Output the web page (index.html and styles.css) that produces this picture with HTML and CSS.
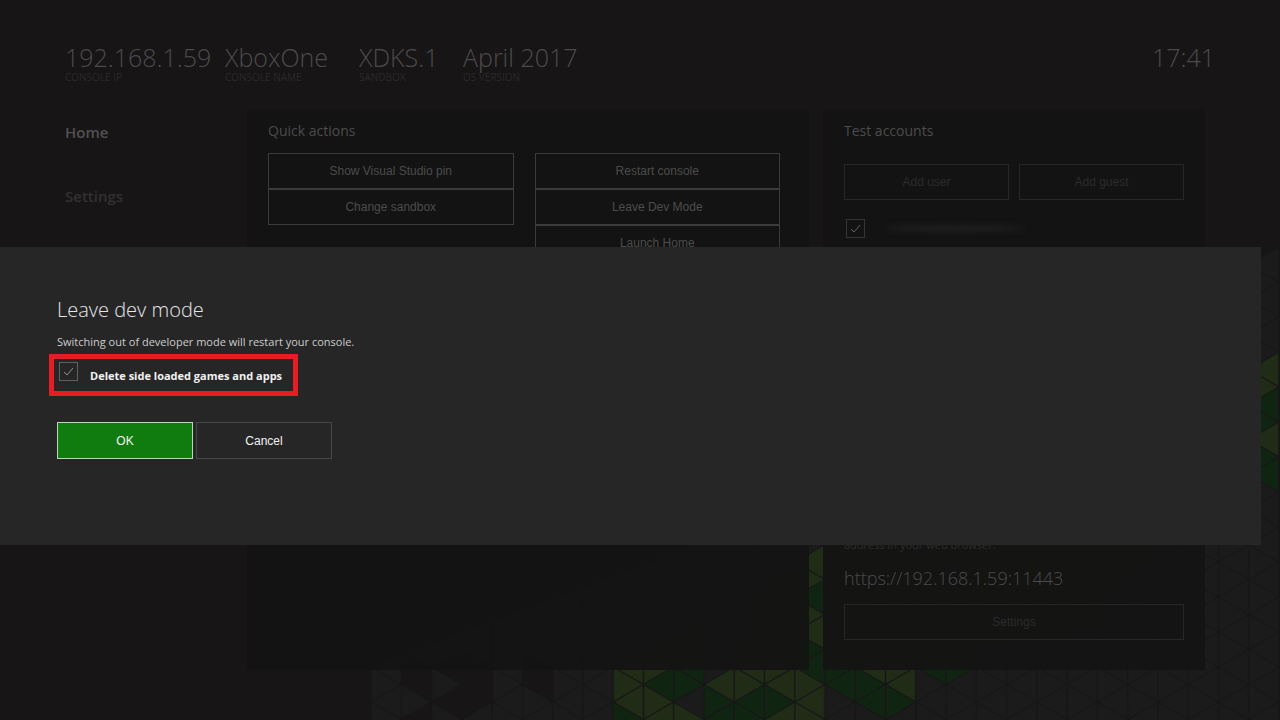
FILE: index.html
```html
<!DOCTYPE html>
<html lang="en">
<head>
  <meta charset="UTF-8">
  <meta name="viewport" content="width=device-width, initial-scale=1.0">
  <title>Dev Home</title>
  <link rel="stylesheet" href="styles.css">
</head>
<body>
  <!-- triangle wallpaper, drawn on a grid of 30 x 17.5 cells -->
  <svg class="wallpaper" viewBox="0 0 900 473" preserveAspectRatio="none" aria-hidden="true">
    <defs>
      <pattern id="mesh" width="60" height="35" patternUnits="userSpaceOnUse">
        <path d="M0 0L60 35M0 35L60 0M0 0V35M30 0V35M60 0V35" />
      </pattern>
    </defs>
    <g transform="scale(30 17.5)">
      <path class="grey" d="M0 24L14 15L29 1L30 0V27.1H0z" />
      <path class="olive" d="M8 24L9 23L10 24L9 25L10 26L11 27L10 28L9 27L8 26z" />
      <path class="green" d="M8 26L9 27L8 28z" />
      <path class="green" d="M9 25L11 23V25L10 26z" />
      <path class="olive" d="M11 25L13 23L14 24L15 25V28L13 27L14 26L13 25L12 26z" />
      <path class="green" d="M11 25L12 26L13 25L14 26L13 27L12 28L11 27z" />
      <path class="olive" d="M14 18L15 17V19L14 20zM14 18L15 19L14 20zM14 22L15 21V23z" />
      <path class="olive" d="M14 20L15 19L14 18zM14 22L15 21L14 20z" />
      <path class="green" d="M14 20L15 19V21zM14 22L15 23L16 24V26L15 25L14 24z" />
      <path class="green" d="M16 24L18 26L17 27L16 26z" />
      <path class="olive" d="M16 24L17 23L18 24V26z" />
      <path class="green" d="M18 24L19 23L20 24L19 25z" />
      <path class="olive" d="M29 7L30 6V8L29 9zM29 11L30 10V12z" />
      <path class="green" d="M29 9L30 8V10L29 11zM29 11L30 12V14L29 13z" />
      <path class="olive" d="M8 24L11 21V24zM13 19L14 18V24H12zM15 10H26V18L24 20V22L20 23V24H15z" opacity="0.6" />
    </g>
    <rect class="mesh" width="900" height="473" />
    <g class="gaps" transform="scale(30 17.5)">
      <path d="M1 23V25L2 26V24zM1 27L2 26V28zM2 24L3 25L2 26L3 27L4 26V24L3 23zM5 23V25L6 26V24z" />
    </g>
  </svg>

  <div class="home">
    <header class="header">
      <dl class="facts">
        <div><dd>192.168.1.59</dd><dt>CONSOLE IP</dt></div>
        <div><dd>XboxOne</dd><dt>CONSOLE NAME</dt></div>
        <div><dd>XDKS.1</dd><dt>SANDBOX</dt></div>
        <div><dd>April 2017</dd><dt>OS VERSION</dt></div>
      </dl>
      <time class="clock">17:41</time>
    </header>

    <div class="content">
      <nav class="nav">
        <a class="active" href="#home">Home</a>
        <a href="#settings">Settings</a>
      </nav>

      <main class="panel actions">
        <h2>Quick actions</h2>
        <div class="action-columns">
          <div class="stack">
            <button type="button">Show Visual Studio pin</button>
            <button type="button">Change sandbox</button>
          </div>
          <div class="stack">
            <button type="button">Restart console</button>
            <button type="button">Leave Dev Mode</button>
            <button type="button">Launch Home</button>
          </div>
        </div>
      </main>

      <aside class="panel accounts">
        <h2>Test accounts</h2>
        <div class="account-buttons">
          <button type="button">Add user</button>
          <button type="button">Add guest</button>
        </div>
        <div class="account">
          <input type="checkbox" aria-label="Signed in" checked>
          <span class="account-name"></span>
        </div>
        <div class="remote">
          <p>address in your web browser.</p>
          <p class="url">https://192.168.1.59:11443</p>
          <button type="button">Settings</button>
        </div>
      </aside>
    </div>
  </div>

  <div class="dialog" role="dialog" aria-labelledby="dialog-title">
    <h1 id="dialog-title">Leave dev mode</h1>
    <p>Switching out of developer mode will restart your console.</p>
    <div class="option">
      <input type="checkbox" id="delete-apps" checked>
      <label for="delete-apps">Delete side loaded games and apps</label>
    </div>
    <div class="dialog-buttons">
      <button type="button" class="ok">OK</button>
      <button type="button">Cancel</button>
    </div>
  </div>
</body>
</html>
```
FILE: styles.css
```css
:root {
  --background: #171516;
  --panel: rgba(19, 19, 19, 0.92);
  --dialog: #262626;
  --line: #3b3b3b;
  --line-dim: #272727;
  --text: #4c4b4c;
  --accent: #107c10;
}

* {
  margin: 0;
  padding: 0;
  box-sizing: border-box;
}

body {
  position: relative;
  min-height: 100vh;
  overflow: hidden;
  background: var(--background);
  color: var(--text);
  font-family: "Open Sans", "Noto Sans", sans-serif;
  font-size: 12px;
}

button {
  height: 36px;
  background: transparent;
  border: 1px solid var(--line);
  color: var(--text);
  font-family: "Liberation Sans", Arial, sans-serif;
  font-size: 12px;
}

input[type="checkbox"] {
  appearance: none;
  width: 19px;
  height: 19px;
  border: 1px solid #343434;
}

input[type="checkbox"]:checked {
  background: url("data:image/svg+xml,%3Csvg xmlns='http://www.w3.org/2000/svg' viewBox='0 0 17 17'%3E%3Cpath d='M4 9l3 3 6-7' fill='none' stroke='%23606060'/%3E%3C/svg%3E");
}

.wallpaper {
  position: absolute;
  right: 1px;
  bottom: 0;
  width: 908px;
  height: 473px;
}

.wallpaper .grey { fill: #1b1b1c; }
.wallpaper .olive { fill: #202c16; }
.wallpaper .green { fill: #102511; }
.wallpaper .mesh { fill: url(#mesh); }
.wallpaper .gaps { fill: #181516; }

.wallpaper pattern path {
  fill: none;
  stroke: #151615;
  stroke-width: 1.5;
}

.home {
  position: relative;
  display: flex;
  flex-direction: column;
  min-height: 100vh;
  padding: 43px 75px 50px 65px;
}

.header {
  display: flex;
  justify-content: space-between;
  height: 66px;
}

.facts {
  display: grid;
  grid-template-columns: 160px 134px 104px auto;
}

.facts div {
  display: flex;
  flex-direction: column;
}

.facts dd,
.clock {
  font-size: 25px;
  font-weight: 300;
  line-height: 29px;
}

.facts dt {
  color: #2b292a;
  font-size: 10px;
  line-height: 10px;
}

.clock {
  margin-right: -10px;
}

.content {
  flex: 1;
  display: grid;
  grid-template-columns: 168px 1fr 382px;
  gap: 14px;
}

.nav {
  display: flex;
  flex-direction: column;
  gap: 40px;
  padding-top: 11px;
}

.nav a {
  color: #333132;
  font-size: 15px;
  font-weight: 600;
  line-height: 24px;
  text-decoration: none;
}

.nav a.active {
  color: #525152;
}

.panel {
  display: flex;
  flex-direction: column;
  padding: 11px 21px 30px;
  background: var(--panel);
}

.panel.actions {
  padding-right: 29px;
}

.panel h2 {
  font-size: 14px;
  font-weight: 400;
  line-height: 22px;
}

.action-columns {
  display: grid;
  grid-template-columns: 1fr 1fr;
  gap: 21px;
  margin-top: 11px;
}

.stack {
  display: flex;
  flex-direction: column;
}

.accounts button {
  border-color: var(--line-dim);
  color: #2b2b2b;
}

.account-buttons {
  display: grid;
  grid-template-columns: 1fr 1fr;
  gap: 10px;
  margin-top: 22px;
}

.account {
  display: flex;
  align-items: center;
  gap: 20px;
  margin: 19px 2px 0;
}

.account-name {
  width: 140px;
  height: 5px;
  background: #242424;
  border-radius: 50%;
  filter: blur(3px);
}

.remote {
  display: flex;
  flex-direction: column;
  margin-top: auto;
}

.remote p {
  color: #2d2d2d;
  font-size: 11px;
  line-height: 16px;
}

.remote .url {
  margin: 10px 0 11px;
  color: var(--text);
  font-size: 18px;
  font-weight: 300;
  line-height: 30px;
}

.dialog {
  position: absolute;
  top: 247px;
  left: 0;
  right: 19px;
  padding: 48px 57px 86px;
  background: var(--dialog);
  color: #ccc;
}

.dialog h1 {
  color: #e6e6e6;
  font-size: 20px;
  font-weight: 300;
  line-height: 30px;
}

.dialog p {
  margin-top: 8px;
  font-size: 11px;
  line-height: 18px;
}

.option {
  display: flex;
  width: fit-content;
  gap: 12px;
  margin: 3px 0 0 -8px;
  padding: 3px 11px 3px 5px;
  border: 5px solid #e81c24;
}

.option input[type="checkbox"] {
  border-color: #404040;
  filter: brightness(1.5);
}

.option label {
  padding: 3px 0 1px;
  color: #f2f2f2;
  font-size: 11px;
  font-weight: 700;
  line-height: 22px;
}

.dialog-buttons {
  display: flex;
  gap: 3px;
  margin-top: 26px;
}

.dialog-buttons button {
  width: 136px;
  height: 37px;
  border-color: #484848;
  color: #f2f2f2;
}

.dialog-buttons .ok {
  background: var(--accent);
  border-color: #b9d8b9;
}
```
